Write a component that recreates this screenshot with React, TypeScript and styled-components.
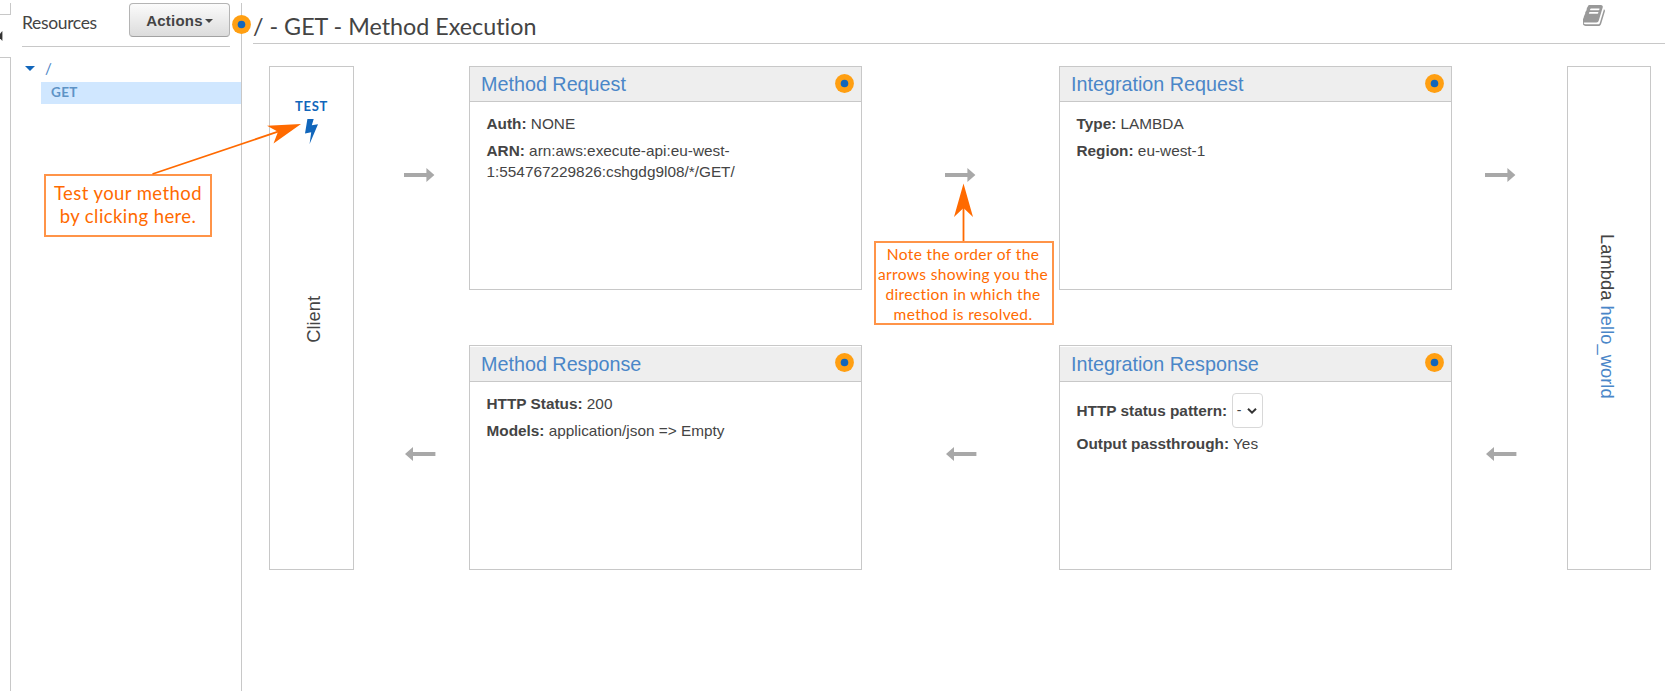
import React from "react";
import styled, { createGlobalStyle } from "styled-components";

const GlobalStyle = createGlobalStyle`
  * { box-sizing: border-box; }
  html, body { margin: 0; padding: 0; background: #fff; overflow: hidden; }
  body {
    font-family: "Liberation Sans", Arial, sans-serif;
    font-variant-ligatures: none;
    color: #444;
  }
`;

const LINE = "#c8c8c8";
const ORANGE = "#ff6a00";

const Page = styled.div`
  position: relative;
  display: flex;
  width: 1665px;
  height: 691px;
  overflow: hidden;
`;

/* Collapsed drawer on the far left */
const Rail = styled.div`
  display: flex;
  flex-direction: column;
  flex: none;
  width: 11px;
  padding-top: 3px;
`;
const RailTop = styled.div`
  height: 12px;
  border-right: 1px solid ${LINE};
  border-bottom: 1px solid ${LINE};
`;
const RailToggle = styled.div`
  display: flex;
  align-items: center;
  height: 42px;
  svg { display: block; }
`;
const RailBody = styled.div`
  flex: 1;
  border-top: 1px solid ${LINE};
  border-right: 1px solid ${LINE};
`;

const Sidebar = styled.aside`
  flex: none;
  width: 231px;
  margin-top: 3px;
  border-right: 1px solid ${LINE};
`;
const SidebarHead = styled.div`
  display: flex;
  justify-content: space-between;
  height: 44px;
  margin: 0 11px;
  border-bottom: 1px solid ${LINE};
`;
const SidebarTitle = styled.h2`
  margin: 0;
  padding-top: 8px;
  font: 400 17.5px/24px Lato, sans-serif;
  font-variant-ligatures: none;
  letter-spacing: -0.35px;
`;
const ActionsButton = styled.button`
  display: flex;
  align-items: center;
  justify-content: center;
  gap: 2px;
  width: 101px;
  height: 34px;
  padding: 1px 0 0;
  border: 1px solid #b4b4b4;
  border-bottom-color: #a2a2a2;
  border-radius: 4px;
  background: linear-gradient(#fbfbfb, #dcdcdc);
  color: #444;
  font: 700 15px/20px "Liberation Sans", Arial, sans-serif;
  letter-spacing: 0.2px;
`;
const Caret = styled.span<{ $size: number; $color: string }>`
  border: ${(p) => p.$size}px solid transparent;
  border-top-color: ${(p) => p.$color};
  border-bottom: 0;
`;
const TreeRoot = styled.div`
  display: flex;
  align-items: center;
  gap: 10px;
  height: 35px;
  padding: 7px 0 0 14px;
  color: #4a83c4;
  font: 400 15px/20px Lato, sans-serif;
`;
const TreeItem = styled.div`
  height: 22px;
  margin-left: 30px;
  padding-left: 10px;
  background: #d0e7ff;
  color: #5e93c6;
  font: 700 13.5px/21px Lato, sans-serif;
  letter-spacing: 0.4px;
`;

const Main = styled.main`
  flex: 1;
  padding: 3px 0 0 11px;
`;
const MainHead = styled.header`
  display: flex;
  justify-content: space-between;
  height: 41px;
  padding-right: 60px;
  border-bottom: 1px solid ${LINE};
  svg { margin-top: 2px; }
`;
const MainTitle = styled.h1`
  margin: 0;
  padding-top: 8px;
  font: 400 23.3px/30px Lato, sans-serif;
  font-variant-ligatures: none;
  white-space: nowrap;
`;

const Flow = styled.section`
  display: grid;
  grid-template-columns: 85px 115px 393px 197px 393px 115px 84px;
  grid-template-rows: 224px 225px;
  row-gap: 55px;
  padding: 22px 0 0 16px;
`;
const Endpoint = styled.div<{ $col: number }>`
  grid-column: ${(p) => p.$col};
  grid-row: 1 / 3;
  display: flex;
  flex-direction: column;
  align-items: center;
  border: 1px solid ${LINE};
`;
const TestLink = styled.div`
  display: flex;
  flex-direction: column;
  align-items: center;
  gap: 4px;
  height: 228px;
  padding-top: 30px;
  color: #1166bb;
  font: 700 13px/18px Lato, sans-serif;
  letter-spacing: 0.7px;
  svg { display: block; }
`;
const VerticalLabel = styled.div<{ $up?: boolean }>`
  writing-mode: vertical-rl;
  font-size: 18.3px;
  line-height: 22px;
  white-space: nowrap;
  ${(p) => (p.$up ? "transform: rotate(180deg); margin: 1px 0 0 4px;" : "margin: 167px 4px 0 0; letter-spacing: 0.06px;")}
`;
const Link = styled.span`
  color: #4a86c8;
`;

const ArrowCell = styled.div<{ $col: number; $row: number }>`
  grid-column: ${(p) => p.$col};
  grid-row: ${(p) => p.$row};
  display: flex;
  justify-content: flex-start;
  padding-top: 102px;
  padding-left: ${(p) => (p.$col === 2 ? 50 : p.$col === 4 ? 83 : 33)}px;
  svg { display: block; margin-left: ${(p) => (p.$row === 2 ? 1 : 0)}px; }
`;

const Card = styled.article<{ $col: number; $row: number }>`
  grid-column: ${(p) => p.$col};
  grid-row: ${(p) => p.$row};
  padding-top: ${(p) => (p.$row === 2 ? 1 : 0)}px;
  border: 1px solid ${LINE};
`;
const CardHead = styled.div<{ $row: number }>`
  display: flex;
  justify-content: space-between;
  height: 35px;
  padding: 0 7.5px 0 11px;
  background: #eee;
  border-bottom: 1px solid ${LINE};
  color: #4a86c8;
  font-size: 19.75px;
  line-height: 34px;
  svg { display: block; margin-top: ${(p) => (p.$row === 2 ? 6 : 7)}px; }
`;
const CardBody = styled.div`
  padding: 11px 16.5px;
`;
const Field = styled.p`
  margin: 0 0 6px;
  font-size: 15.35px;
  line-height: 21px;
`;
const SelectField = styled(Field)`
  display: flex;
  align-items: center;
  gap: 4.5px;
  height: 35px;
  margin: 0 0 5px;
`;
const StatusSelect = styled.span`
  display: flex;
  align-items: center;
  justify-content: space-between;
  width: 31px;
  height: 35px;
  padding: 0 5px 0 4px;
  border: 1px solid #d8d8d8;
  border-radius: 4px;
  font-size: 14px;
`;

const Overlay = styled.svg`
  position: absolute;
  left: 0;
  top: 0;
  pointer-events: none;
`;
const DividerBadge = styled.div`
  position: absolute;
  left: 232px;
  top: 15px;
  svg { display: block; }
`;
const Note = styled.div<{ $x: number; $y: number; $w: number; $h: number }>`
  position: absolute;
  left: ${(p) => p.$x}px;
  top: ${(p) => p.$y}px;
  width: ${(p) => p.$w}px;
  height: ${(p) => p.$h}px;
  border: 2px solid #ff9448;
  background: #fff;
  color: ${ORANGE};
  text-align: center;
  white-space: nowrap;
`;
const TestNote = styled(Note)`
  padding-top: 6px;
  font: 400 18.5px/23px Lato, sans-serif;
  font-variant-ligatures: none;
  letter-spacing: 0.42px;
`;
const OrderNote = styled(Note)`
  font: 400 15.5px/20px Lato, sans-serif;
  font-variant-ligatures: none;
  letter-spacing: 0.37px;
  padding: 1px 2px 0 0;
`;

const Badge = () => (
  <svg width="19" height="19" viewBox="0 0 19 19">
    <circle cx="9.5" cy="9.5" r="9.4" fill="#ff9f12" />
    <circle cx="9.5" cy="9.5" r="3.8" fill="#1166bb" />
  </svg>
);

const Arrow = ({ left }: { left?: boolean }) => (
  <svg width="31" height="14" viewBox="0 0 31 14">
    <path
      fill="#a8a8a8"
      d={left ? "M0 7L8 0V5H30.4V9H8V14Z" : "M30.4 7L22.4 0V5H0V9H22.4V14Z"}
    />
  </svg>
);

const BookIcon = () => (
  <svg width="22" height="21" viewBox="60 128 1608 1536" preserveAspectRatio="none">
    <path
      fill="#999"
      d="M1639 478q40 57 18 129l-275 906q-19 64-76.5 107.5t-122.5 43.5h-923q-77 0-148.5-53.5t-99.5-131.5q-24-67-2-127 0-4 3-27t4-37q1-8-3-21.5t-3-19.5q2-11 8-21t16.5-23.5 16.5-23.5q23-38 45-91.5t30-91.5q3-10 .5-30t-.5-28q3-11 17-28t17-23q21-36 42-92t25-90q1-9-2.5-32t.5-28q4-13 22-30.5t22-22.5q19-26 42.5-84.5t27.5-96.5q1-8-3-25.5t-2-26.5q2-8 9-18t18-23 17-21q8-12 16.5-30.5t15-35 16-36 19.5-32 26.5-23.5 36-11.5 47.5 5.5l-1 3q38-9 51-9h761q74 0 114 56t18 130l-274 906q-36 119-71.5 153.5t-128.5 34.5h-869q-27 0-38 15-11 16-1 43 24 70 144 70h923q29 0 56-15.5t35-41.5l300-987q7-22 5-57 38 15 59 43zm-1064 2q-4 13 2 22.5t20 9.5h608q13 0 25.5-9.5t16.5-22.5l21-64q4-13-2-22.5t-20-9.5h-608q-13 0-25.5 9.5t-16.5 22.5zm-83 256q-4 13 2 22.5t20 9.5h608q13 0 25.5-9.5t16.5-22.5l21-64q4-13-2-22.5t-20-9.5h-608q-13 0-25.5 9.5t-16.5 22.5z"
    />
  </svg>
);

export default function App() {
  return (
    <Page>
      <GlobalStyle />
      <Rail>
        <RailTop />
        <RailToggle>
          <svg width="3" height="10" viewBox="0 0 3 10">
            <path d="M2.4 0V10L-2 5Z" fill="#333" />
          </svg>
        </RailToggle>
        <RailBody />
      </Rail>

      <Sidebar>
        <SidebarHead>
          <SidebarTitle>Resources</SidebarTitle>
          <ActionsButton>
            Actions
            <Caret $size={4.5} $color="#444" />
          </ActionsButton>
        </SidebarHead>
        <TreeRoot>
          <Caret $size={5} $color="#1166bb" />
          <span>/</span>
        </TreeRoot>
        <TreeItem>GET</TreeItem>
      </Sidebar>

      <Main>
        <MainHead>
          <MainTitle>/ - GET - Method Execution</MainTitle>
          <BookIcon />
        </MainHead>
        <Flow>
          <Endpoint $col={1}>
            <TestLink>
              TEST
              <svg width="13" height="25" viewBox="0 0 13 25">
                <path d="M2.4 0H8.7L6.8 6.2L13 5.2L4.6 25L6.2 13.2L0 14.6Z" fill="#1166bb" />
              </svg>
            </TestLink>
            <VerticalLabel $up>Client</VerticalLabel>
          </Endpoint>

          <ArrowCell $col={2} $row={1}><Arrow /></ArrowCell>
          <ArrowCell $col={4} $row={1}><Arrow /></ArrowCell>
          <ArrowCell $col={6} $row={1}><Arrow /></ArrowCell>
          <ArrowCell $col={2} $row={2}><Arrow left /></ArrowCell>
          <ArrowCell $col={4} $row={2}><Arrow left /></ArrowCell>
          <ArrowCell $col={6} $row={2}><Arrow left /></ArrowCell>

          <Card $col={3} $row={1}>
            <CardHead $row={1}>Method Request<Badge /></CardHead>
            <CardBody>
              <Field><b>Auth:</b> NONE</Field>
              <Field>
                <b>ARN:</b> arn:aws:execute-api:eu-west-<br />
                1:554767229826:cshgdg9l08/*/GET/
              </Field>
            </CardBody>
          </Card>
          <Card $col={5} $row={1}>
            <CardHead $row={1}>Integration Request<Badge /></CardHead>
            <CardBody>
              <Field><b>Type:</b> LAMBDA</Field>
              <Field><b>Region:</b> eu-west-1</Field>
            </CardBody>
          </Card>
          <Card $col={3} $row={2}>
            <CardHead $row={2}>Method Response<Badge /></CardHead>
            <CardBody>
              <Field><b>HTTP Status:</b> 200</Field>
              <Field><b>Models:</b> application/json =&gt; Empty</Field>
            </CardBody>
          </Card>
          <Card $col={5} $row={2}>
            <CardHead $row={2}>Integration Response<Badge /></CardHead>
            <CardBody>
              <SelectField>
                <b>HTTP status pattern:</b>
                <StatusSelect>
                  -
                  <svg width="10" height="6" viewBox="0 0 10 6">
                    <path d="M1 0.8L5 4.6L9 0.8" fill="none" stroke="#333" strokeWidth="2" />
                  </svg>
                </StatusSelect>
              </SelectField>
              <Field><b>Output passthrough:</b> Yes</Field>
            </CardBody>
          </Card>

          <Endpoint $col={7}>
            <VerticalLabel>Lambda <Link>hello_world</Link></VerticalLabel>
          </Endpoint>
        </Flow>
      </Main>

      <DividerBadge><Badge /></DividerBadge>
      <TestNote $x={44} $y={174} $w={168} $h={63}>
        Test your method<br />by clicking here.
      </TestNote>
      <OrderNote $x={874} $y={241} $w={180} $h={84}>
        Note the order of the<br />arrows showing you the<br />direction in which the<br />method is resolved.
      </OrderNote>
      <Overlay width="1665" height="691">
        <path d="M152.5 174L278 131.7M963.5 241V207" stroke={ORANGE} strokeWidth="1.8" fill="none" />
        <path d="M301 124L267 125.7L278 131.7L273.5 143.5ZM963.5 183.5L954 217L963.5 208L973 217Z" fill={ORANGE} />
      </Overlay>
    </Page>
  );
}
